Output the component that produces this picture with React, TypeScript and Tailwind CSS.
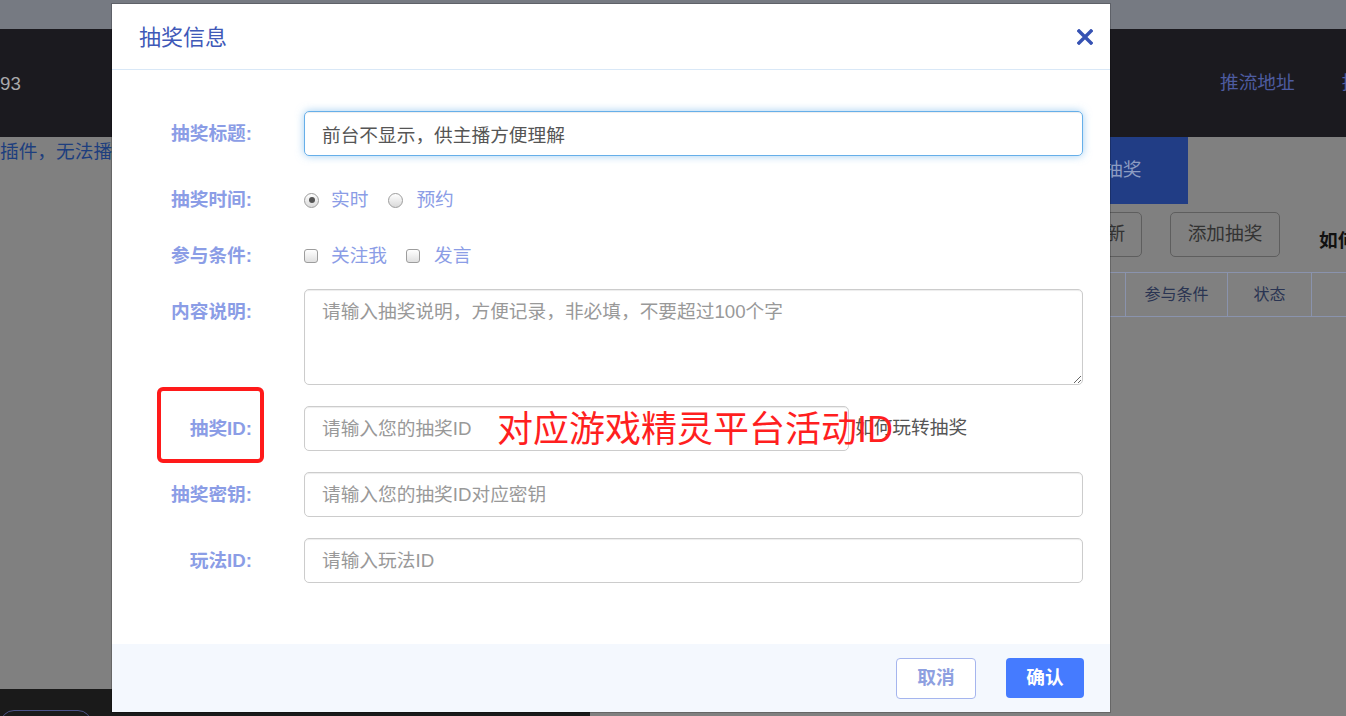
import React from "react";

function Label({ children }: { children: React.ReactNode }) {
  return (
    <div className="flex h-[45px] w-[140px] shrink-0 items-center justify-end pt-[1px] text-[18.7px] font-bold text-[#8b9de6]">
      {children}
    </div>
  );
}

function Radio({ checked }: { checked?: boolean }) {
  return (
    <span className="flex h-[15px] w-[15px] shrink-0 items-center justify-center rounded-full border border-[#9d9d9d] bg-linear-to-b from-white to-[#dadada]">
      {checked ? <span className="h-[6px] w-[6px] rounded-full bg-[#555]" /> : null}
    </span>
  );
}

function Check() {
  return (
    <span className="block h-[14px] w-[14px] shrink-0 rounded-[3px] border border-[#9d9d9d] bg-linear-to-b from-white to-[#e0e0e0]" />
  );
}

export default function App() {
  return (
    <div className="relative flex h-[716px] w-[1346px] flex-col overflow-hidden bg-[#808080] font-['Liberation_Sans','Noto_Sans_CJK_SC',sans-serif]">
      {/* background page */}
      <div className="h-[29px] shrink-0 bg-[#767a82]" />
      <div className="flex h-[108px] shrink-0 items-center whitespace-nowrap bg-[#1b1a1f] text-[18.7px]">
        <div className="w-[1220px] shrink-0 pt-[2px] text-[#a9a9ab]">93</div>
        <div className="shrink-0 text-[#4e5ca0]">推流地址</div>
        <div className="ml-[47px] shrink-0 text-[#4e5ca0]">推流密钥</div>
      </div>
      <div className="flex flex-1">
        <div className="w-[1040px] shrink-0">
          <div className="w-[112px] overflow-hidden whitespace-nowrap pt-[1px] text-[18.7px] leading-[27px] text-[#1d3e7e]">
            插件，无法播放
          </div>
        </div>
        <div className="flex w-[306px] shrink-0 flex-col">
          <div className="flex h-[67px] w-[148px] items-center bg-[#213d85] pl-[64px] text-[18.7px] text-[#8c9cc2]">
            抽奖
          </div>
          <div className="mt-[8px] flex items-start whitespace-nowrap text-[18.7px]">
            <div className="ml-[31px] flex h-[45px] w-[71px] shrink-0 items-center justify-center rounded-[5px] border border-[#5e5e5e] text-[#333]">
              刷新
            </div>
            <div className="ml-[28px] flex h-[45px] w-[110px] shrink-0 items-center justify-center rounded-[5px] border border-[#5e5e5e] text-[#333]">
              添加抽奖
            </div>
            <div className="ml-[39px] shrink-0 pt-[15px] font-bold text-[#111]">如何玩转抽奖</div>
          </div>
          <div className="mt-[15px] flex h-[45px] whitespace-nowrap border-y border-[#8a93ad] text-[16px] text-[#2a3452]">
            <div className="w-[86px] shrink-0 border-r border-[#8a93ad]" />
            <div className="flex w-[102px] shrink-0 items-center justify-center border-r border-[#8a93ad] pt-[1px]">参与条件</div>
            <div className="flex w-[84px] shrink-0 items-center justify-center border-r border-[#8a93ad] pt-[1px]">状态</div>
            <div className="w-[100px] shrink-0" />
          </div>
        </div>
      </div>
      <div className="h-[27px] w-[590px] shrink-0 bg-[#1a1a1a] pt-[21px]">
        <div className="h-[20px] w-[92px] rounded-t-[14px] border border-[#4c5287]" />
      </div>

      {/* modal */}
      <div className="absolute left-[112px] top-[4px] flex h-[708px] w-[998px] flex-col bg-white shadow-[0_0_0_1px_rgba(0,0,0,0.2)]">
        <div className="flex h-[66px] shrink-0 items-center justify-between border-b border-[#d9e8f7] pl-[27px] pr-[17px]">
          <h2 className="pt-[2px] text-[22px] leading-[30px] text-[#3f59b8]">抽奖信息</h2>
          <svg width="16" height="16" viewBox="0 0 16 16" className="mt-[1px]">
            <path d="M2 2 L14 14 M14 2 L2 14" stroke="#3652b3" strokeWidth="3.4" strokeLinecap="square" />
          </svg>
        </div>

        <div className="flex flex-1 flex-col">
          {/* title */}
          <div className="mt-[41px] flex items-start">
            <Label>抽奖标题:</Label>
            <div className="ml-[52px] w-[779px]">
              <input
                readOnly
                value="前台不显示，供主播方便理解"
                className="h-[45px] w-full rounded-[5px] border border-[#66afe9] px-[17px] text-[18.7px] text-[#555] shadow-[inset_0_1px_1px_rgba(0,0,0,0.075),0_0_8px_rgba(102,175,233,0.6)] outline-none"
              />
            </div>
          </div>

          {/* time */}
          <div className="mt-[22px] flex h-[44px] items-center">
            <Label>抽奖时间:</Label>
            <div className="ml-[52px] flex items-center pt-[1px] text-[18.7px] text-[#8b9de6]">
              <Radio checked />
              <span className="ml-[12px]">实时</span>
              <span className="ml-[20px]">
                <Radio />
              </span>
              <span className="ml-[13px]">预约</span>
            </div>
          </div>

          {/* conditions */}
          <div className="mt-[12px] flex h-[44px] items-center">
            <Label>参与条件:</Label>
            <div className="ml-[52px] flex items-center pt-[1px] text-[18.7px] text-[#8b9de6]">
              <Check />
              <span className="ml-[13px]">关注我</span>
              <span className="ml-[19px]">
                <Check />
              </span>
              <span className="ml-[14px]">发言</span>
            </div>
          </div>

          {/* description */}
          <div className="mt-[11px] flex items-start">
            <Label>内容说明:</Label>
            <div className="ml-[52px] w-[779px]">
              <textarea
                placeholder="请输入抽奖说明，方便记录，非必填，不要超过100个字"
                className="block h-[96px] w-full rounded-[5px] border border-[#ccc] px-[17px] pt-[9px] text-[18.7px] leading-[26px] text-[#555] shadow-[inset_0_1px_1px_rgba(0,0,0,0.075)] outline-none placeholder:text-[#999]"
              />
            </div>
          </div>

          {/* lottery ID */}
          <div className="relative mt-[21px] flex items-start">
            <Label>抽奖ID:</Label>
            <div className="relative ml-[52px] flex w-[779px] items-center">
              <input
                readOnly
                placeholder="请输入您的抽奖ID"
                className="h-[45px] w-[545px] shrink-0 rounded-[5px] border border-[#ccc] px-[17px] text-[18.7px] text-[#555] shadow-[inset_0_1px_1px_rgba(0,0,0,0.075)] outline-none placeholder:text-[#999]"
              />
              <span className="ml-[6px] whitespace-nowrap text-[18.7px] text-[#555]">如何玩转抽奖</span>
              <span className="absolute left-[193px] top-[4px] whitespace-nowrap text-[36px] leading-[40px] text-[#ff1f1f]">
                对应游戏精灵平台活动ID
              </span>
            </div>
            <div className="absolute left-[45px] top-[-19px] h-[76px] w-[107px] rounded-[6px] border-[4px] border-[#ff1a1a]" />
          </div>

          {/* key */}
          <div className="mt-[21px] flex items-start">
            <Label>抽奖密钥:</Label>
            <div className="ml-[52px] w-[779px]">
              <input
                readOnly
                placeholder="请输入您的抽奖ID对应密钥"
                className="h-[45px] w-full rounded-[5px] border border-[#ccc] px-[17px] text-[18.7px] text-[#555] shadow-[inset_0_1px_1px_rgba(0,0,0,0.075)] outline-none placeholder:text-[#999]"
              />
            </div>
          </div>

          {/* play ID */}
          <div className="mt-[21px] flex items-start">
            <Label>玩法ID:</Label>
            <div className="ml-[52px] w-[779px]">
              <input
                readOnly
                placeholder="请输入玩法ID"
                className="h-[45px] w-full rounded-[5px] border border-[#ccc] px-[17px] text-[18.7px] text-[#555] shadow-[inset_0_1px_1px_rgba(0,0,0,0.075)] outline-none placeholder:text-[#999]"
              />
            </div>
          </div>
        </div>

        <div className="flex h-[68px] shrink-0 items-center justify-end gap-[30px] bg-[#f4f8fe] pr-[26px]">
          <button className="flex h-[41px] w-[80px] items-center justify-center rounded-[4px] border border-[#a5b5ee] bg-white text-[18.7px] font-semibold text-[#8ea0e0]">
            取消
          </button>
          <button className="flex h-[40px] w-[78px] items-center justify-center rounded-[4px] bg-[#457bff] text-[18.7px] font-bold text-white">
            确认
          </button>
        </div>
      </div>
    </div>
  );
}
